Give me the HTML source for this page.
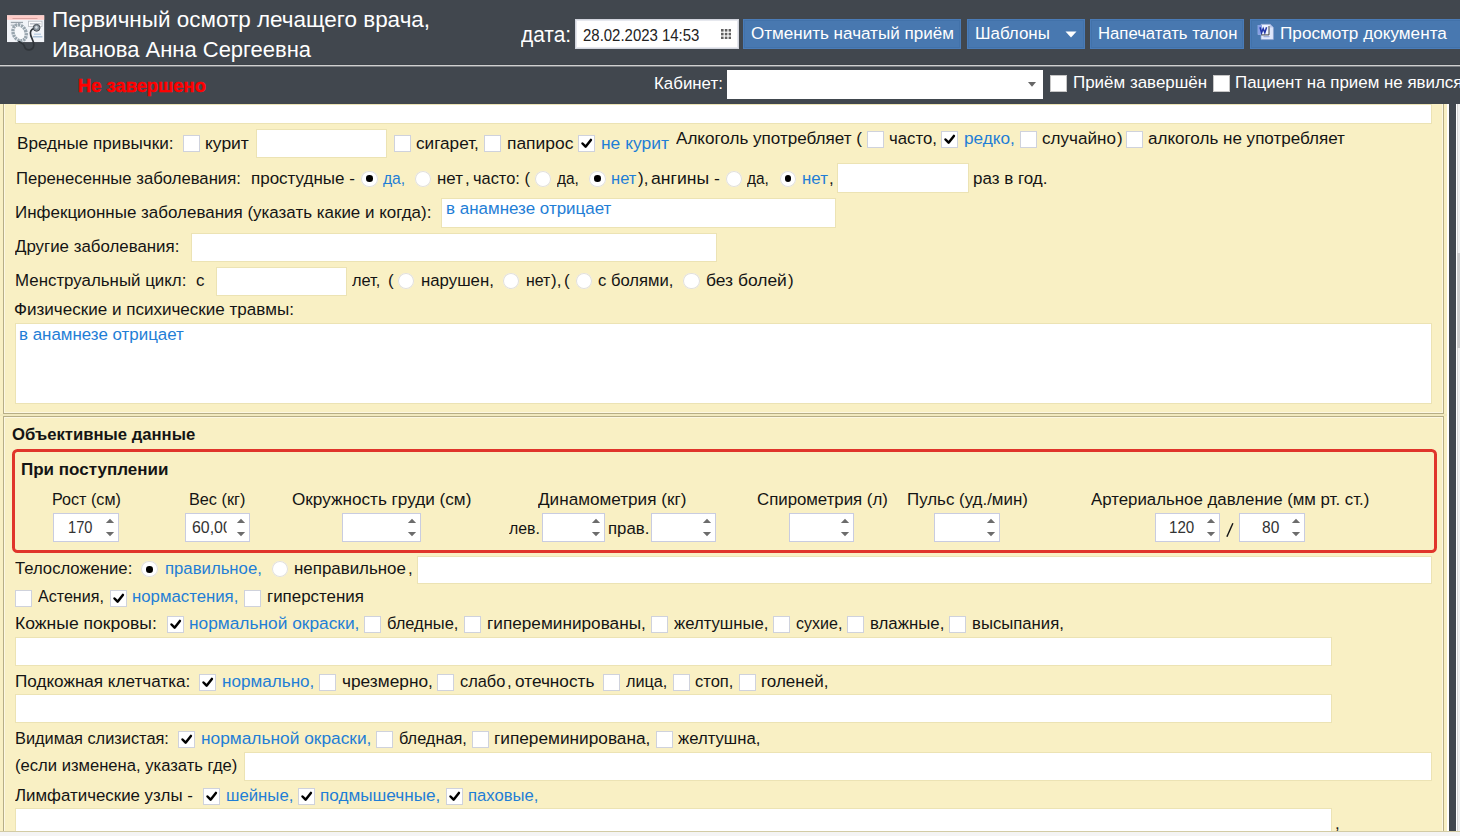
<!DOCTYPE html><html lang="ru"><head><meta charset="utf-8"><title>Первичный осмотр</title><style>
html,body{margin:0;padding:0;}
body{width:1460px;height:836px;overflow:hidden;position:relative;background:#f9f0c4;font-family:"Liberation Sans",sans-serif;}
#r div,#r svg,#r span{position:absolute;}
#r span{white-space:nowrap;line-height:1;transform-origin:0 0;display:block;}

</style></head><body><div id="r">
<div style="left:0px;top:0px;width:1460px;height:104px;background:#41474e;"></div>
<div style="left:0px;top:64px;width:1460px;height:1px;background:#3c4248;"></div>
<div style="left:0px;top:65px;width:1460px;height:1px;background:#d0d0d0;"></div>
<div style="left:0px;top:66px;width:1460px;height:1px;background:#7b7f84;"></div>
<div style="left:575px;top:19px;width:164px;height:30px;background:#fff;box-shadow:inset 0 0 0 1px #d2d5de, inset 0 0 0 2px #e6e8ee;"></div>
<svg style="left:721px;top:29px" width="10.2" height="10.2" viewBox="0 0 10.2 10.2"><g fill="#606060"><rect x="0" y="0" width="2.6" height="2.6"/><rect x="3.8" y="0" width="2.6" height="2.6"/><rect x="7.6" y="0" width="2.6" height="2.6"/><rect x="0" y="3.8" width="2.6" height="2.6"/><rect x="3.8" y="3.8" width="2.6" height="2.6"/><rect x="7.6" y="3.8" width="2.6" height="2.6"/><rect x="0" y="7.6" width="2.6" height="2.6"/><rect x="3.8" y="7.6" width="2.6" height="2.6"/><rect x="7.6" y="7.6" width="2.6" height="2.6"/></g></svg>
<div style="left:743px;top:19px;width:218px;height:30px;background:#4878b0;box-shadow:inset 0 0 0 1px #4a7cb8, inset 0 0 0 2px #4272aa;"></div>
<div style="left:967px;top:19px;width:118px;height:30px;background:#4878b0;box-shadow:inset 0 0 0 1px #4a7cb8, inset 0 0 0 2px #4272aa;"></div>
<svg style="left:1065px;top:31px" width="12" height="7" viewBox="0 0 12 7"><path d="M0.5 0.5 L11.5 0.5 L6 6.5 Z" fill="#fff"/></svg>
<div style="left:1090px;top:19px;width:154px;height:30px;background:#4878b0;box-shadow:inset 0 0 0 1px #4a7cb8, inset 0 0 0 2px #4272aa;"></div>
<div style="left:1250px;top:19px;width:220px;height:30px;background:#4878b0;box-shadow:inset 0 0 0 1px #4a7cb8, inset 0 0 0 2px #4272aa;"></div>
<svg style="left:1257px;top:23px" width="18" height="18" viewBox="0 0 18 18">
<path d="M4 1.2 H13 L16.4 4.4 V16.6 H4 Z" fill="#dfe7fb" stroke="#8fa2cf" stroke-width="0.6"/>
<path d="M13 1.2 V4.4 H16.4 Z" fill="#b9c6ea"/>
<rect x="6.5" y="13.2" width="6" height="1" fill="#8fa2d8"/>
<rect x="0.8" y="2" width="11" height="9.6" fill="#eef3ff"/>
<path d="M0.8 2 H5 V11.6 H0.8 Z" fill="#6d8be0" opacity="0.8"/>
<path d="M3 4.2 L4.6 9.8 L6.2 5.6 L7.8 9.8 L9.6 4.2" fill="none" stroke="#2436a8" stroke-width="1.5"/>
<path d="M4.2 11.9 H12 V3" fill="none" stroke="#333" stroke-width="0.9"/>
</svg>
<svg style="left:5px;top:13px" width="42" height="40" viewBox="0 0 42 40">
<rect x="1.6" y="2.6" width="38" height="27.2" fill="#2e3338" opacity="0.55"/>
<rect x="2" y="2.3" width="37.2" height="26.8" fill="#f1f4f8"/>
<rect x="2" y="2.3" width="37.2" height="4.5" fill="#ffcdc9"/>
<rect x="7.5" y="5" width="25" height="0.9" fill="#d9a09c"/>
<rect x="23.4" y="8.2" width="13.6" height="5.2" fill="#fdfdfd" stroke="#b4b9c0" stroke-width="0.8"/>
<rect x="25" y="10.3" width="10.6" height="1.1" fill="#a9b0ba"/>
<rect x="5.8" y="8.8" width="12.2" height="1.3" fill="#9aa3ab"/>
<rect x="5.8" y="11.6" width="9" height="1.1" fill="#a6aeb6"/>
<rect x="28" y="23.2" width="9.4" height="1.2" fill="#9bb6cf"/>
<rect x="29" y="20.6" width="7" height="1.2" fill="#b5cbe0"/>
<ellipse cx="14.6" cy="19.8" rx="6.3" ry="8.3" transform="rotate(-24 14.6 19.8)" fill="#f7f9fb" stroke="#98a5ae" stroke-width="3.4" stroke-dasharray="2.2 0.8"/>
<path d="M13.5 28.2 C16 30.5 18.5 29.8 19.2 32.6 C20.4 38.6 28.6 38.2 28.8 31.8 C29 27.4 25.2 24.4 25.4 19.8 C25.6 16.8 28 15.2 30.4 15.6" fill="none" stroke="#30353a" stroke-width="1.7"/>
<circle cx="31.6" cy="14.8" r="3.4" fill="#87929b" stroke="#4a5057" stroke-width="1"/>
<circle cx="31.4" cy="14.4" r="1.3" fill="#d9dfe4"/>
</svg>
<div style="left:727px;top:70px;width:316px;height:29px;background:#fff;"></div>
<svg style="left:1028px;top:82px" width="8" height="5" viewBox="0 0 8 5"><path d="M0 0 L8 0 L4 4.8 Z" fill="#666"/></svg>
<div style="left:1050px;top:75px;width:17px;height:17px;background:#fff;box-shadow:inset 0 0 0 1px #c6c6c6;"></div>
<div style="left:1213px;top:75px;width:17px;height:17px;background:#fff;box-shadow:inset 0 0 0 1px #c6c6c6;"></div>
<div style="left:0px;top:104px;width:1460px;height:728px;background:#f9f0c4;"></div>
<div style="left:1447px;top:104px;width:2px;height:729px;background:#fff;"></div>
<div style="left:1449px;top:104px;width:7px;height:728px;background:#41474e;"></div>
<div style="left:1456px;top:104px;width:4px;height:732px;background:#f0f0f0;"></div>
<div style="left:1456px;top:104px;width:1px;height:732px;background:#fff;"></div>
<div style="left:1457px;top:104px;width:1px;height:732px;background:#d4d4d4;"></div>
<div style="left:1457px;top:253px;width:3px;height:95px;background:#cdcdcd;"></div>
<div style="left:0px;top:831px;width:1460px;height:1px;background:#d2cba4;"></div>
<div style="left:0px;top:832px;width:1460px;height:4px;background:#f4f4f4;"></div>
<div style="left:0px;top:414px;width:1447px;height:2px;background:#f1e9be;"></div>
<div style="left:3px;top:104px;width:1px;height:310px;background:#b7ae86;"></div>
<div style="left:4px;top:104px;width:1px;height:310px;background:#fcf7e2;"></div>
<div style="left:1442px;top:104px;width:1px;height:310px;background:#fcf7e2;"></div>
<div style="left:1443px;top:104px;width:1px;height:310px;background:#b7ae86;"></div>
<div style="left:4px;top:412px;width:1439px;height:1px;background:#fcf7e2;"></div>
<div style="left:3px;top:413px;width:1441px;height:1px;background:#b7ae86;"></div>
<div style="left:3px;top:416px;width:1px;height:420px;background:#b7ae86;"></div>
<div style="left:4px;top:416px;width:1px;height:420px;background:#fcf7e2;"></div>
<div style="left:1442px;top:416px;width:1px;height:420px;background:#fcf7e2;"></div>
<div style="left:1443px;top:416px;width:1px;height:420px;background:#b7ae86;"></div>
<div style="left:3px;top:416px;width:1441px;height:1px;background:#b7ae86;"></div>
<div style="left:4px;top:417px;width:1439px;height:1px;background:#fcf7e2;"></div>
<div style="left:15px;top:104px;width:1417px;height:20px;background:#fff;box-shadow:inset 0 0 0 1px #ece3b4;"></div>
<div style="left:183px;top:135px;width:17px;height:17px;background:#fff;box-shadow:inset 0 0 0 1px #cfd2dc;"></div>
<div style="left:256px;top:129px;width:131px;height:29px;background:#fff;box-shadow:inset 0 0 0 1px #ece3b4;"></div>
<div style="left:394px;top:135px;width:17px;height:17px;background:#fff;box-shadow:inset 0 0 0 1px #cfd2dc;"></div>
<div style="left:484px;top:135px;width:17px;height:17px;background:#fff;box-shadow:inset 0 0 0 1px #cfd2dc;"></div>
<div style="left:578px;top:135px;width:17px;height:17px;background:#fff;box-shadow:inset 0 0 0 1px #cfd2dc;"></div>
<svg style="left:578px;top:135px" width="17" height="17" viewBox="0 0 17 17"><path d="M4.5 8.5 L7.6 11.7 L12.9 4.9" fill="none" stroke="#000" stroke-width="2.5" stroke-linecap="round" stroke-linejoin="round"/></svg>
<div style="left:867px;top:131px;width:17px;height:17px;background:#fff;box-shadow:inset 0 0 0 1px #cfd2dc;"></div>
<div style="left:941px;top:131px;width:17px;height:17px;background:#fff;box-shadow:inset 0 0 0 1px #cfd2dc;"></div>
<svg style="left:941px;top:131px" width="17" height="17" viewBox="0 0 17 17"><path d="M4.5 8.5 L7.6 11.7 L12.9 4.9" fill="none" stroke="#000" stroke-width="2.5" stroke-linecap="round" stroke-linejoin="round"/></svg>
<div style="left:1020px;top:131px;width:17px;height:17px;background:#fff;box-shadow:inset 0 0 0 1px #cfd2dc;"></div>
<div style="left:1126px;top:131px;width:17px;height:17px;background:#fff;box-shadow:inset 0 0 0 1px #cfd2dc;"></div>
<div style="left:361.4px;top:170.6px;width:16.2px;height:16.2px;border-radius:50%;background:#fff;box-shadow:inset 0 0 0 1px #e2e0da;"></div>
<div style="left:366.2px;top:175.39999999999998px;width:6.6px;height:6.6px;border-radius:50%;background:#000;"></div>
<div style="left:415.29999999999995px;top:170.6px;width:16.2px;height:16.2px;border-radius:50%;background:#fff;box-shadow:inset 0 0 0 1px #e2e0da;"></div>
<div style="left:534.9px;top:170.6px;width:16.2px;height:16.2px;border-radius:50%;background:#fff;box-shadow:inset 0 0 0 1px #e2e0da;"></div>
<div style="left:589.4px;top:170.6px;width:16.2px;height:16.2px;border-radius:50%;background:#fff;box-shadow:inset 0 0 0 1px #e2e0da;"></div>
<div style="left:594.2px;top:175.39999999999998px;width:6.6px;height:6.6px;border-radius:50%;background:#000;"></div>
<div style="left:725.9px;top:170.6px;width:16.2px;height:16.2px;border-radius:50%;background:#fff;box-shadow:inset 0 0 0 1px #e2e0da;"></div>
<div style="left:779.9px;top:170.6px;width:16.2px;height:16.2px;border-radius:50%;background:#fff;box-shadow:inset 0 0 0 1px #e2e0da;"></div>
<div style="left:784.7px;top:175.39999999999998px;width:6.6px;height:6.6px;border-radius:50%;background:#000;"></div>
<div style="left:837px;top:163px;width:132px;height:30px;background:#fff;box-shadow:inset 0 0 0 1px #ece3b4;"></div>
<div style="left:441px;top:198px;width:395px;height:30px;background:#fff;box-shadow:inset 0 0 0 1px #ece3b4;"></div>
<div style="left:191px;top:233px;width:526px;height:29px;background:#fff;box-shadow:inset 0 0 0 1px #ece3b4;"></div>
<div style="left:216px;top:267px;width:131px;height:29px;background:#fff;box-shadow:inset 0 0 0 1px #ece3b4;"></div>
<div style="left:397.9px;top:272.9px;width:16.2px;height:16.2px;border-radius:50%;background:#fff;box-shadow:inset 0 0 0 1px #e2e0da;"></div>
<div style="left:502.9px;top:272.9px;width:16.2px;height:16.2px;border-radius:50%;background:#fff;box-shadow:inset 0 0 0 1px #e2e0da;"></div>
<div style="left:575.9px;top:272.9px;width:16.2px;height:16.2px;border-radius:50%;background:#fff;box-shadow:inset 0 0 0 1px #e2e0da;"></div>
<div style="left:683.4px;top:272.9px;width:16.2px;height:16.2px;border-radius:50%;background:#fff;box-shadow:inset 0 0 0 1px #e2e0da;"></div>
<div style="left:15px;top:323px;width:1417px;height:81px;background:#fff;box-shadow:inset 0 0 0 1px #ece3b4;"></div>
<div style="left:12px;top:449px;width:1425px;height:104px;box-sizing:border-box;border:3px solid #e0352b;border-radius:5.5px;"></div>
<div style="left:53px;top:513px;width:66px;height:29px;background:#fff;box-shadow:inset 0 0 0 1px #c9cce0;"></div>
<svg style="left:105px;top:513px" width="10" height="29" viewBox="0 0 10 29"><path d="M0.9 10 L5 5.8 L9.1 10 Z M0.9 19 L5 23.2 L9.1 19 Z" fill="#6c6c6c"/></svg>
<div style="left:185px;top:513px;width:65px;height:29px;background:#fff;box-shadow:inset 0 0 0 1px #c9cce0;"></div>
<svg style="left:236px;top:513px" width="10" height="29" viewBox="0 0 10 29"><path d="M0.9 10 L5 5.8 L9.1 10 Z M0.9 19 L5 23.2 L9.1 19 Z" fill="#6c6c6c"/></svg>
<div style="left:342px;top:513px;width:79px;height:29px;background:#fff;box-shadow:inset 0 0 0 1px #c9cce0;"></div>
<svg style="left:407px;top:513px" width="10" height="29" viewBox="0 0 10 29"><path d="M0.9 10 L5 5.8 L9.1 10 Z M0.9 19 L5 23.2 L9.1 19 Z" fill="#6c6c6c"/></svg>
<div style="left:542px;top:513px;width:63px;height:29px;background:#fff;box-shadow:inset 0 0 0 1px #c9cce0;"></div>
<svg style="left:591px;top:513px" width="10" height="29" viewBox="0 0 10 29"><path d="M0.9 10 L5 5.8 L9.1 10 Z M0.9 19 L5 23.2 L9.1 19 Z" fill="#6c6c6c"/></svg>
<div style="left:651px;top:513px;width:65px;height:29px;background:#fff;box-shadow:inset 0 0 0 1px #c9cce0;"></div>
<svg style="left:702px;top:513px" width="10" height="29" viewBox="0 0 10 29"><path d="M0.9 10 L5 5.8 L9.1 10 Z M0.9 19 L5 23.2 L9.1 19 Z" fill="#6c6c6c"/></svg>
<div style="left:789px;top:513px;width:65px;height:29px;background:#fff;box-shadow:inset 0 0 0 1px #c9cce0;"></div>
<svg style="left:840px;top:513px" width="10" height="29" viewBox="0 0 10 29"><path d="M0.9 10 L5 5.8 L9.1 10 Z M0.9 19 L5 23.2 L9.1 19 Z" fill="#6c6c6c"/></svg>
<div style="left:934px;top:513px;width:66px;height:29px;background:#fff;box-shadow:inset 0 0 0 1px #c9cce0;"></div>
<svg style="left:986px;top:513px" width="10" height="29" viewBox="0 0 10 29"><path d="M0.9 10 L5 5.8 L9.1 10 Z M0.9 19 L5 23.2 L9.1 19 Z" fill="#6c6c6c"/></svg>
<div style="left:1155px;top:513px;width:65px;height:29px;background:#fff;box-shadow:inset 0 0 0 1px #c9cce0;"></div>
<svg style="left:1206px;top:513px" width="10" height="29" viewBox="0 0 10 29"><path d="M0.9 10 L5 5.8 L9.1 10 Z M0.9 19 L5 23.2 L9.1 19 Z" fill="#6c6c6c"/></svg>
<svg style="left:1224px;top:521px" width="12" height="18" viewBox="0 0 12 18"><path d="M8.9 2.2 L2.9 15.8" stroke="#141414" stroke-width="1.45" fill="none"/></svg>
<div style="left:1239px;top:513px;width:66px;height:29px;background:#fff;box-shadow:inset 0 0 0 1px #c9cce0;"></div>
<svg style="left:1291px;top:513px" width="10" height="29" viewBox="0 0 10 29"><path d="M0.9 10 L5 5.8 L9.1 10 Z M0.9 19 L5 23.2 L9.1 19 Z" fill="#6c6c6c"/></svg>
<div style="left:141.4px;top:561.1999999999999px;width:16.2px;height:16.2px;border-radius:50%;background:#fff;box-shadow:inset 0 0 0 1px #e2e0da;"></div>
<div style="left:146.2px;top:566.0px;width:6.6px;height:6.6px;border-radius:50%;background:#000;"></div>
<div style="left:271.9px;top:561.1999999999999px;width:16.2px;height:16.2px;border-radius:50%;background:#fff;box-shadow:inset 0 0 0 1px #e2e0da;"></div>
<div style="left:417px;top:556px;width:1015px;height:28px;background:#fff;box-shadow:inset 0 0 0 1px #ece3b4;"></div>
<div style="left:15px;top:590px;width:17px;height:17px;background:#fff;box-shadow:inset 0 0 0 1px #cfd2dc;"></div>
<div style="left:110px;top:590px;width:17px;height:17px;background:#fff;box-shadow:inset 0 0 0 1px #cfd2dc;"></div>
<svg style="left:110px;top:590px" width="17" height="17" viewBox="0 0 17 17"><path d="M4.5 8.5 L7.6 11.7 L12.9 4.9" fill="none" stroke="#000" stroke-width="2.5" stroke-linecap="round" stroke-linejoin="round"/></svg>
<div style="left:244px;top:590px;width:17px;height:17px;background:#fff;box-shadow:inset 0 0 0 1px #cfd2dc;"></div>
<div style="left:167px;top:616px;width:17px;height:17px;background:#fff;box-shadow:inset 0 0 0 1px #cfd2dc;"></div>
<svg style="left:167px;top:616px" width="17" height="17" viewBox="0 0 17 17"><path d="M4.5 8.5 L7.6 11.7 L12.9 4.9" fill="none" stroke="#000" stroke-width="2.5" stroke-linecap="round" stroke-linejoin="round"/></svg>
<div style="left:364px;top:616px;width:17px;height:17px;background:#fff;box-shadow:inset 0 0 0 1px #cfd2dc;"></div>
<div style="left:464px;top:616px;width:17px;height:17px;background:#fff;box-shadow:inset 0 0 0 1px #cfd2dc;"></div>
<div style="left:651px;top:616px;width:17px;height:17px;background:#fff;box-shadow:inset 0 0 0 1px #cfd2dc;"></div>
<div style="left:773px;top:616px;width:17px;height:17px;background:#fff;box-shadow:inset 0 0 0 1px #cfd2dc;"></div>
<div style="left:847px;top:616px;width:17px;height:17px;background:#fff;box-shadow:inset 0 0 0 1px #cfd2dc;"></div>
<div style="left:949px;top:616px;width:17px;height:17px;background:#fff;box-shadow:inset 0 0 0 1px #cfd2dc;"></div>
<div style="left:15px;top:637px;width:1317px;height:29px;background:#fff;box-shadow:inset 0 0 0 1px #ece3b4;"></div>
<div style="left:199px;top:674px;width:17px;height:17px;background:#fff;box-shadow:inset 0 0 0 1px #cfd2dc;"></div>
<svg style="left:199px;top:674px" width="17" height="17" viewBox="0 0 17 17"><path d="M4.5 8.5 L7.6 11.7 L12.9 4.9" fill="none" stroke="#000" stroke-width="2.5" stroke-linecap="round" stroke-linejoin="round"/></svg>
<div style="left:319px;top:674px;width:17px;height:17px;background:#fff;box-shadow:inset 0 0 0 1px #cfd2dc;"></div>
<div style="left:437px;top:674px;width:17px;height:17px;background:#fff;box-shadow:inset 0 0 0 1px #cfd2dc;"></div>
<div style="left:603px;top:674px;width:17px;height:17px;background:#fff;box-shadow:inset 0 0 0 1px #cfd2dc;"></div>
<div style="left:673px;top:674px;width:17px;height:17px;background:#fff;box-shadow:inset 0 0 0 1px #cfd2dc;"></div>
<div style="left:739px;top:674px;width:17px;height:17px;background:#fff;box-shadow:inset 0 0 0 1px #cfd2dc;"></div>
<div style="left:15px;top:694px;width:1317px;height:29px;background:#fff;box-shadow:inset 0 0 0 1px #ece3b4;"></div>
<div style="left:178px;top:731px;width:17px;height:17px;background:#fff;box-shadow:inset 0 0 0 1px #cfd2dc;"></div>
<svg style="left:178px;top:731px" width="17" height="17" viewBox="0 0 17 17"><path d="M4.5 8.5 L7.6 11.7 L12.9 4.9" fill="none" stroke="#000" stroke-width="2.5" stroke-linecap="round" stroke-linejoin="round"/></svg>
<div style="left:376px;top:731px;width:17px;height:17px;background:#fff;box-shadow:inset 0 0 0 1px #cfd2dc;"></div>
<div style="left:472px;top:731px;width:17px;height:17px;background:#fff;box-shadow:inset 0 0 0 1px #cfd2dc;"></div>
<div style="left:656px;top:731px;width:17px;height:17px;background:#fff;box-shadow:inset 0 0 0 1px #cfd2dc;"></div>
<div style="left:244px;top:752px;width:1188px;height:29px;background:#fff;box-shadow:inset 0 0 0 1px #ece3b4;"></div>
<div style="left:203px;top:788px;width:17px;height:17px;background:#fff;box-shadow:inset 0 0 0 1px #cfd2dc;"></div>
<svg style="left:203px;top:788px" width="17" height="17" viewBox="0 0 17 17"><path d="M4.5 8.5 L7.6 11.7 L12.9 4.9" fill="none" stroke="#000" stroke-width="2.5" stroke-linecap="round" stroke-linejoin="round"/></svg>
<div style="left:298px;top:788px;width:17px;height:17px;background:#fff;box-shadow:inset 0 0 0 1px #cfd2dc;"></div>
<svg style="left:298px;top:788px" width="17" height="17" viewBox="0 0 17 17"><path d="M4.5 8.5 L7.6 11.7 L12.9 4.9" fill="none" stroke="#000" stroke-width="2.5" stroke-linecap="round" stroke-linejoin="round"/></svg>
<div style="left:446px;top:788px;width:17px;height:17px;background:#fff;box-shadow:inset 0 0 0 1px #cfd2dc;"></div>
<svg style="left:446px;top:788px" width="17" height="17" viewBox="0 0 17 17"><path d="M4.5 8.5 L7.6 11.7 L12.9 4.9" fill="none" stroke="#000" stroke-width="2.5" stroke-linecap="round" stroke-linejoin="round"/></svg>
<div style="left:15px;top:808px;width:1317px;height:33px;background:#fff;box-shadow:inset 0 0 0 1px #ece3b4;"></div>
<span style="left:52.45px;top:9.07px;font-size:22px;color:#fff;transform:scaleX(1.0215);">Первичный осмотр лечащего врача,</span>
<span style="left:52.45px;top:39.07px;font-size:22px;color:#fff;transform:scaleX(0.9987);">Иванова Анна Сергеевна</span>
<span style="left:521.4625px;top:24.90px;font-size:21.5px;color:#fff;transform:scaleX(0.9709);">дата:</span>
<span style="left:582.595px;top:27.28px;font-size:16.2px;color:#222;transform:scaleX(0.9237);">28.02.2023 14:53</span>
<span style="left:751.065px;top:24.97px;font-size:17.4px;color:#fff;transform:scaleX(0.9801);">Отменить начатый приём</span>
<span style="left:975.065px;top:24.97px;font-size:17.4px;color:#fff;transform:scaleX(0.9733);">Шаблоны</span>
<span style="left:1097.565px;top:24.97px;font-size:17.4px;color:#fff;transform:scaleX(0.9607);">Напечатать талон</span>
<span style="left:1280.065px;top:24.97px;font-size:17.4px;color:#fff;transform:scaleX(0.9870);">Просмотр документа</span>
<span style="left:77.5625px;top:77.58px;font-size:17.5px;color:#ff0000;font-weight:bold;transform:scaleX(1.0484);-webkit-text-stroke:0.45px #ff0000;">Не завершено</span>
<span style="left:653.565px;top:75.47px;font-size:17.4px;color:#fff;transform:scaleX(0.9702);">Кабинет:</span>
<span style="left:1073.265px;top:74.27px;font-size:17.4px;color:#fff;transform:scaleX(0.9750);">Приём завершён</span>
<span style="left:1235.165px;top:74.27px;font-size:17.4px;color:#fff;transform:scaleX(0.9720);">Пациент на прием не явился</span>
<span style="left:16.565px;top:135.17px;font-size:17.4px;color:#141414;transform:scaleX(0.9836);">Вредные привычки:</span>
<span style="left:205.065px;top:135.17px;font-size:17.4px;color:#141414;transform:scaleX(1.0049);">курит</span>
<span style="left:416.065px;top:135.17px;font-size:17.4px;color:#141414;transform:scaleX(0.9872);">сигарет,</span>
<span style="left:506.565px;top:135.17px;font-size:17.4px;color:#141414;transform:scaleX(1.0016);">папирос</span>
<span style="left:600.565px;top:135.17px;font-size:17.4px;color:#1f7ed6;transform:scaleX(1.0015);">не курит</span>
<span style="left:675.565px;top:129.97px;font-size:17.4px;color:#141414;transform:scaleX(0.9811);">Алкоголь употребляет (</span>
<span style="left:888.565px;top:129.97px;font-size:17.4px;color:#141414;transform:scaleX(0.9631);">часто,</span>
<span style="left:963.565px;top:129.97px;font-size:17.4px;color:#1f7ed6;transform:scaleX(0.9893);">редко,</span>
<span style="left:1041.565px;top:129.97px;font-size:17.4px;color:#141414;transform:scaleX(0.9815);">случайно</span>
<span style="left:1117.18px;top:129.97px;font-size:17.4px;color:#141414;transform:scaleX(0.9720);">)</span>
<span style="left:1147.565px;top:129.97px;font-size:17.4px;color:#141414;transform:scaleX(0.9794);">алкоголь не употребляет</span>
<span style="left:15.565px;top:169.77px;font-size:17.4px;color:#141414;transform:scaleX(0.9594);">Перенесенные заболевания:</span>
<span style="left:250.565px;top:169.77px;font-size:17.4px;color:#141414;transform:scaleX(0.9773);">простудные -</span>
<span style="left:382.565px;top:169.77px;font-size:17.4px;color:#1f7ed6;transform:scaleX(0.8992);">да,</span>
<span style="left:437.165px;top:169.77px;font-size:17.4px;color:#141414;transform:scaleX(0.9699);">нет</span>
<span style="left:464.9px;top:169.77px;font-size:17.4px;color:#141414;transform:scaleX(0.9720);">,</span>
<span style="left:472.565px;top:169.77px;font-size:17.4px;color:#141414;transform:scaleX(0.9427);">часто: (</span>
<span style="left:556.565px;top:169.77px;font-size:17.4px;color:#141414;transform:scaleX(0.8870);">да,</span>
<span style="left:611.065px;top:169.77px;font-size:17.4px;color:#1f7ed6;transform:scaleX(0.9512);">нет</span>
<span style="left:638.09px;top:169.77px;font-size:17.4px;color:#141414;transform:scaleX(0.9720);">),</span>
<span style="left:650.565px;top:169.77px;font-size:17.4px;color:#141414;transform:scaleX(1.0119);">ангины -</span>
<span style="left:746.565px;top:169.77px;font-size:17.4px;color:#141414;transform:scaleX(0.8870);">да,</span>
<span style="left:801.565px;top:169.77px;font-size:17.4px;color:#1f7ed6;transform:scaleX(0.9699);">нет</span>
<span style="left:829.4px;top:169.77px;font-size:17.4px;color:#141414;transform:scaleX(0.9720);">,</span>
<span style="left:973.065px;top:169.77px;font-size:17.4px;color:#141414;transform:scaleX(0.9751);">раз в год.</span>
<span style="left:15.065px;top:203.77px;font-size:17.4px;color:#141414;transform:scaleX(0.9755);">Инфекционные заболевания (указать какие и когда):</span>
<span style="left:446.065px;top:200.27px;font-size:17.4px;color:#1f7ed6;transform:scaleX(0.9757);">в анамнезе отрицает</span>
<span style="left:15.065px;top:237.77px;font-size:17.4px;color:#141414;transform:scaleX(0.9696);">Другие заболевания:</span>
<span style="left:15.065px;top:272.27px;font-size:17.4px;color:#141414;transform:scaleX(0.9704);">Менструальный цикл:</span>
<span style="left:196.27px;top:272.27px;font-size:17.4px;color:#141414;transform:scaleX(0.9720);">с</span>
<span style="left:351.565px;top:272.27px;font-size:17.4px;color:#141414;transform:scaleX(0.9417);">лет,</span>
<span style="left:387.93px;top:272.27px;font-size:17.4px;color:#141414;transform:scaleX(0.9720);">(</span>
<span style="left:420.565px;top:272.27px;font-size:17.4px;color:#141414;transform:scaleX(0.9650);">нарушен,</span>
<span style="left:525.565px;top:272.27px;font-size:17.4px;color:#141414;transform:scaleX(0.9137);">нет</span>
<span style="left:551.34px;top:272.27px;font-size:17.4px;color:#141414;transform:scaleX(0.9720);">),</span>
<span style="left:564.18px;top:272.27px;font-size:17.4px;color:#141414;transform:scaleX(0.9720);">(</span>
<span style="left:598.065px;top:272.27px;font-size:17.4px;color:#141414;transform:scaleX(0.9559);">с болями,</span>
<span style="left:705.565px;top:272.27px;font-size:17.4px;color:#141414;transform:scaleX(1.0027);">без болей</span>
<span style="left:787.68px;top:272.27px;font-size:17.4px;color:#141414;transform:scaleX(0.9720);">)</span>
<span style="left:14.065px;top:301.17px;font-size:17.4px;color:#141414;transform:scaleX(0.9801);">Физические и психические травмы:</span>
<span style="left:19.065px;top:326.07px;font-size:17.4px;color:#1f7ed6;transform:scaleX(0.9728);">в анамнезе отрицает</span>
<span style="left:11.565px;top:425.77px;font-size:17.4px;color:#141414;font-weight:bold;transform:scaleX(0.9585);">Объективные данные</span>
<span style="left:20.565px;top:461.07px;font-size:17.4px;color:#141414;font-weight:bold;transform:scaleX(0.9778);">При поступлении</span>
<span style="left:51.565px;top:490.97px;font-size:17.4px;color:#141414;transform:scaleX(0.9277);">Рост (см)</span>
<span style="left:189.065px;top:490.97px;font-size:17.4px;color:#141414;transform:scaleX(0.9341);">Вес (кг)</span>
<span style="left:292.065px;top:490.97px;font-size:17.4px;color:#141414;transform:scaleX(0.9864);">Окружность груди (см)</span>
<span style="left:537.565px;top:490.97px;font-size:17.4px;color:#141414;transform:scaleX(0.9852);">Динамометрия (кг)</span>
<span style="left:756.565px;top:490.97px;font-size:17.4px;color:#141414;transform:scaleX(0.9664);">Спирометрия (л)</span>
<span style="left:906.565px;top:490.97px;font-size:17.4px;color:#141414;transform:scaleX(0.9721);">Пульс (уд./мин)</span>
<span style="left:1090.565px;top:490.97px;font-size:17.4px;color:#141414;transform:scaleX(0.9680);">Артериальное давление (мм рт. ст.)</span>
<span style="left:67.89999999999999px;top:520.35px;font-size:16px;color:#333;transform:scaleX(0.9175);">170</span>
<span style="left:192.1px;top:520.35px;font-size:16px;color:#333;transform:scaleX(0.9938);clip-path:inset(0 5.2px 0 0);">60,00</span>
<span style="left:508.565px;top:520.27px;font-size:17.4px;color:#141414;transform:scaleX(0.9109);">лев.</span>
<span style="left:608.065px;top:520.27px;font-size:17.4px;color:#141414;transform:scaleX(0.9656);">прав.</span>
<span style="left:1169.1px;top:520.35px;font-size:16px;color:#333;transform:scaleX(0.9475);">120</span>
<span style="left:1261.6px;top:520.35px;font-size:16px;color:#333;transform:scaleX(0.9720);">80</span>
<span style="left:14.565px;top:560.27px;font-size:17.4px;color:#141414;transform:scaleX(0.9580);">Телосложение:</span>
<span style="left:164.565px;top:560.27px;font-size:17.4px;color:#1f7ed6;transform:scaleX(0.9619);">правильное,</span>
<span style="left:294.065px;top:560.27px;font-size:17.4px;color:#141414;transform:scaleX(0.9715);">неправильное</span>
<span style="left:408.4px;top:560.27px;font-size:17.4px;color:#141414;transform:scaleX(0.9720);">,</span>
<span style="left:38.065px;top:588.27px;font-size:17.4px;color:#141414;transform:scaleX(0.9237);">Астения,</span>
<span style="left:132.065px;top:588.27px;font-size:17.4px;color:#1f7ed6;transform:scaleX(0.9645);">нормастения,</span>
<span style="left:266.565px;top:588.27px;font-size:17.4px;color:#141414;transform:scaleX(0.9716);">гиперстения</span>
<span style="left:15.065px;top:614.77px;font-size:17.4px;color:#141414;transform:scaleX(1.0100);">Кожные покровы:</span>
<span style="left:189.065px;top:614.77px;font-size:17.4px;color:#1f7ed6;transform:scaleX(0.9958);">нормальной окраски,</span>
<span style="left:387.065px;top:614.77px;font-size:17.4px;color:#141414;transform:scaleX(0.9469);">бледные,</span>
<span style="left:486.565px;top:614.77px;font-size:17.4px;color:#141414;transform:scaleX(0.9899);">гипереминированы,</span>
<span style="left:673.565px;top:614.77px;font-size:17.4px;color:#141414;transform:scaleX(0.9601);">желтушные,</span>
<span style="left:795.565px;top:614.77px;font-size:17.4px;color:#141414;transform:scaleX(0.9216);">сухие,</span>
<span style="left:869.565px;top:614.77px;font-size:17.4px;color:#141414;transform:scaleX(0.9670);">влажные,</span>
<span style="left:971.565px;top:614.77px;font-size:17.4px;color:#141414;transform:scaleX(0.9610);">высыпания,</span>
<span style="left:15.065px;top:672.77px;font-size:17.4px;color:#141414;transform:scaleX(0.9841);">Подкожная клетчатка:</span>
<span style="left:221.565px;top:672.77px;font-size:17.4px;color:#1f7ed6;transform:scaleX(0.9836);">нормально,</span>
<span style="left:341.565px;top:672.77px;font-size:17.4px;color:#141414;transform:scaleX(0.9941);">чрезмерно,</span>
<span style="left:459.565px;top:672.77px;font-size:17.4px;color:#141414;transform:scaleX(0.9421);">слабо</span>
<span style="left:506.9px;top:672.77px;font-size:17.4px;color:#141414;transform:scaleX(0.9720);">,</span>
<span style="left:514.565px;top:672.77px;font-size:17.4px;color:#141414;transform:scaleX(0.9894);">отечность</span>
<span style="left:626.065px;top:672.77px;font-size:17.4px;color:#141414;transform:scaleX(0.9333);">лица,</span>
<span style="left:695.065px;top:672.77px;font-size:17.4px;color:#141414;transform:scaleX(0.9500);">стоп,</span>
<span style="left:761.065px;top:672.77px;font-size:17.4px;color:#141414;transform:scaleX(0.9777);">голеней,</span>
<span style="left:15.065px;top:729.77px;font-size:17.4px;color:#141414;transform:scaleX(0.9400);">Видимая слизистая:</span>
<span style="left:200.565px;top:729.77px;font-size:17.4px;color:#1f7ed6;transform:scaleX(0.9958);">нормальной окраски,</span>
<span style="left:398.565px;top:729.77px;font-size:17.4px;color:#141414;transform:scaleX(0.9388);">бледная,</span>
<span style="left:494.065px;top:729.77px;font-size:17.4px;color:#141414;transform:scaleX(0.9918);">гипереминирована,</span>
<span style="left:678.065px;top:729.77px;font-size:17.4px;color:#141414;transform:scaleX(0.9601);">желтушна,</span>
<span style="left:15.065px;top:757.27px;font-size:17.4px;color:#141414;transform:scaleX(0.9550);">(если изменена, указать где)</span>
<span style="left:15.065px;top:786.77px;font-size:17.4px;color:#141414;transform:scaleX(0.9701);">Лимфатические узлы -</span>
<span style="left:225.565px;top:786.77px;font-size:17.4px;color:#1f7ed6;transform:scaleX(0.9631);">шейные,</span>
<span style="left:320.065px;top:786.77px;font-size:17.4px;color:#1f7ed6;transform:scaleX(0.9864);">подмышечные,</span>
<span style="left:468.065px;top:786.77px;font-size:17.4px;color:#1f7ed6;transform:scaleX(0.9572);">паховые,</span>
<span style="left:1335.4px;top:814.77px;font-size:17.4px;color:#141414;transform:scaleX(0.9720);">,</span>
<div style="left:0;top:831px;width:1447px;height:1px;background:#d2cba4"></div><div style="left:0;top:832px;width:1456px;height:4px;background:#f4f4f4"></div>
</div></body></html>
